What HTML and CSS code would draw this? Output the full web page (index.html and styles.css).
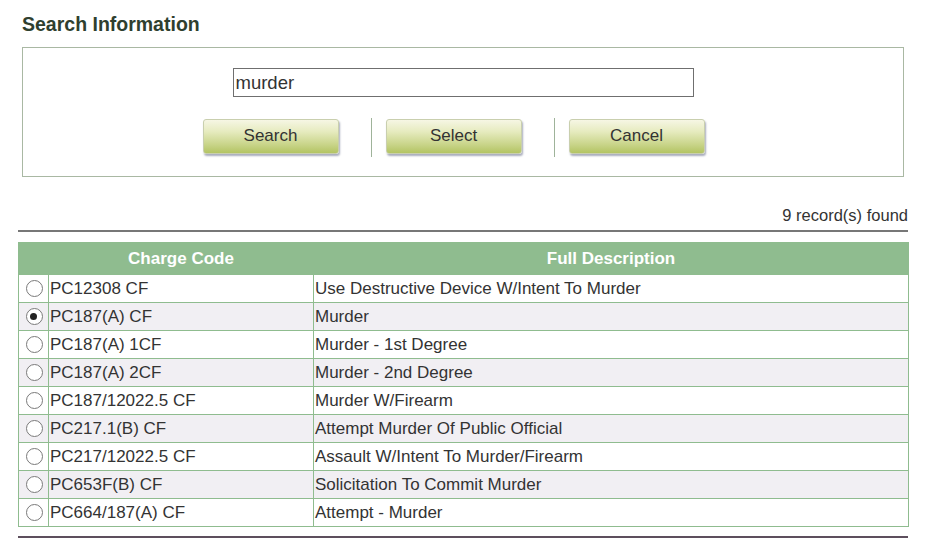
FILE: index.html
```html
<!DOCTYPE html>
<html>
<head>
<meta charset="utf-8">
<link rel="stylesheet" href="styles.css">
</head>
<body>
<div class="page">
  <h1 class="title">Search Information</h1>
  <div class="search-box">
    <div class="input-row">
      <input class="search-input" type="text" value="murder">
    </div>
    <div class="button-row">
      <button class="btn">Search</button>
      <span class="sep"></span>
      <button class="btn">Select</button>
      <span class="sep"></span>
      <button class="btn">Cancel</button>
    </div>
  </div>
  <div class="records">9 record(s) found</div>
  <div class="rule"></div>
  <table class="results">
    <colgroup>
      <col class="c-radio">
      <col class="c-code">
      <col class="c-desc">
    </colgroup>
    <thead>
      <tr><th></th><th>Charge Code</th><th>Full Description</th></tr>
    </thead>
    <tbody>
      <tr><td class="rc"><input class="radio" type="radio" name="c"></td><td>PC12308 CF</td><td>Use Destructive Device W/Intent To Murder</td></tr>
      <tr class="alt"><td class="rc"><input class="radio" type="radio" name="c" checked></td><td>PC187(A) CF</td><td>Murder</td></tr>
      <tr><td class="rc"><input class="radio" type="radio" name="c"></td><td>PC187(A) 1CF</td><td>Murder - 1st Degree</td></tr>
      <tr class="alt"><td class="rc"><input class="radio" type="radio" name="c"></td><td>PC187(A) 2CF</td><td>Murder - 2nd Degree</td></tr>
      <tr><td class="rc"><input class="radio" type="radio" name="c"></td><td>PC187/12022.5 CF</td><td>Murder W/Firearm</td></tr>
      <tr class="alt"><td class="rc"><input class="radio" type="radio" name="c"></td><td>PC217.1(B) CF</td><td>Attempt Murder Of Public Official</td></tr>
      <tr><td class="rc"><input class="radio" type="radio" name="c"></td><td>PC217/12022.5 CF</td><td>Assault W/Intent To Murder/Firearm</td></tr>
      <tr class="alt"><td class="rc"><input class="radio" type="radio" name="c"></td><td>PC653F(B) CF</td><td>Solicitation To Commit Murder</td></tr>
      <tr><td class="rc"><input class="radio" type="radio" name="c"></td><td>PC664/187(A) CF</td><td>Attempt - Murder</td></tr>
    </tbody>
  </table>
  <div class="rule rule-bottom"></div>
</div>
</body>
</html>
```

FILE: styles.css
```css
html, body {
  margin: 0;
  padding: 0;
  background: #ffffff;
}
body {
  font-family: "Liberation Sans", Arial, sans-serif;
  color: #333333;
}
.page {
  padding: 12px 17px 0 18px;
}
.title {
  margin: 0 0 11px 4px;
  font-size: 19.5px;
  line-height: 24px;
  font-weight: bold;
  color: #2f3f2f;
}
.search-box {
  margin: 0 4px;
  border: 1px solid #a9b8a3;
  padding: 20px 0 20px 0;
}
.input-row {
  display: flex;
  justify-content: center;
}
.search-input {
  box-sizing: border-box;
  width: 461px;
  height: 29px;
  margin: 0;
  border: 1px solid #6f6f6f;
  padding: 1px 3px 0 2px;
  font-family: "Liberation Sans", Arial, sans-serif;
  font-size: 18.5px;
  color: #333333;
  outline: none;
  background: #ffffff;
}
.button-row {
  display: flex;
  justify-content: center;
  align-items: center;
  margin-top: 22px;
  padding-right: 18px;
  height: 37px;
}
.btn {
  box-sizing: border-box;
  width: 136px;
  height: 35px;
  margin: 0 1px 2px 0;
  border: 1px solid #c9cfae;
  border-radius: 3px;
  background: linear-gradient(to bottom, #f6f6e4 0%, #e6ebbf 35%, #c8d488 75%, #b3c463 100%);
  box-shadow: 1px 2px 2px #a9adbd;
  font-family: "Liberation Sans", Arial, sans-serif;
  font-size: 17px;
  color: #333333;
  padding: 0 0 2px 0;
}
.sep {
  width: 1px;
  height: 39px;
  background: #9fb39a;
  margin: 0 14px 0 31px;
}
.records {
  margin-top: 28px;
  text-align: right;
  font-size: 16.5px;
  line-height: 20px;
  color: #333333;
}
.rule {
  margin-top: 5px;
  height: 2px;
  background: #777777;
}
.rule-bottom {
  margin-top: 9px;
  background: #5d4f5d;
}
.results {
  margin-top: 10px;
  width: 890px;
  border-collapse: collapse;
  table-layout: fixed;
  border: 1px solid #8fbc8f;
  font-size: 17px;
}
.c-radio { width: 30px; }
.c-code { width: 265px; }
.c-desc { width: 595px; }
.results th {
  background: #8fbc8f;
  color: #ffffff;
  font-weight: bold;
  height: 31px;
  padding: 0;
  text-align: center;
  border: 1px solid #8fbc8f;
  line-height: 31px;
}
.results td {
  height: 27px;
  padding: 0 0 0 1px;
  border: 1px solid #8fbc8f;
  color: #333333;
  line-height: 20px;
  white-space: nowrap;
}
.results tr.alt td {
  background: #f1eff3;
}
.results td.rc {
  padding: 0;
  text-align: center;
  line-height: 0;
}
.radio {
  appearance: none;
  -webkit-appearance: none;
  box-sizing: border-box;
  width: 17px;
  height: 17px;
  margin: 0 0 0 1px;
  border: 1.5px solid #7a7a7a;
  border-radius: 50%;
  background: #ffffff;
  vertical-align: middle;
  position: relative;
}
.radio:checked::after {
  content: "";
  position: absolute;
  left: 3.5px;
  top: 3.5px;
  width: 7px;
  height: 7px;
  border-radius: 50%;
  background: #222222;
}
```
